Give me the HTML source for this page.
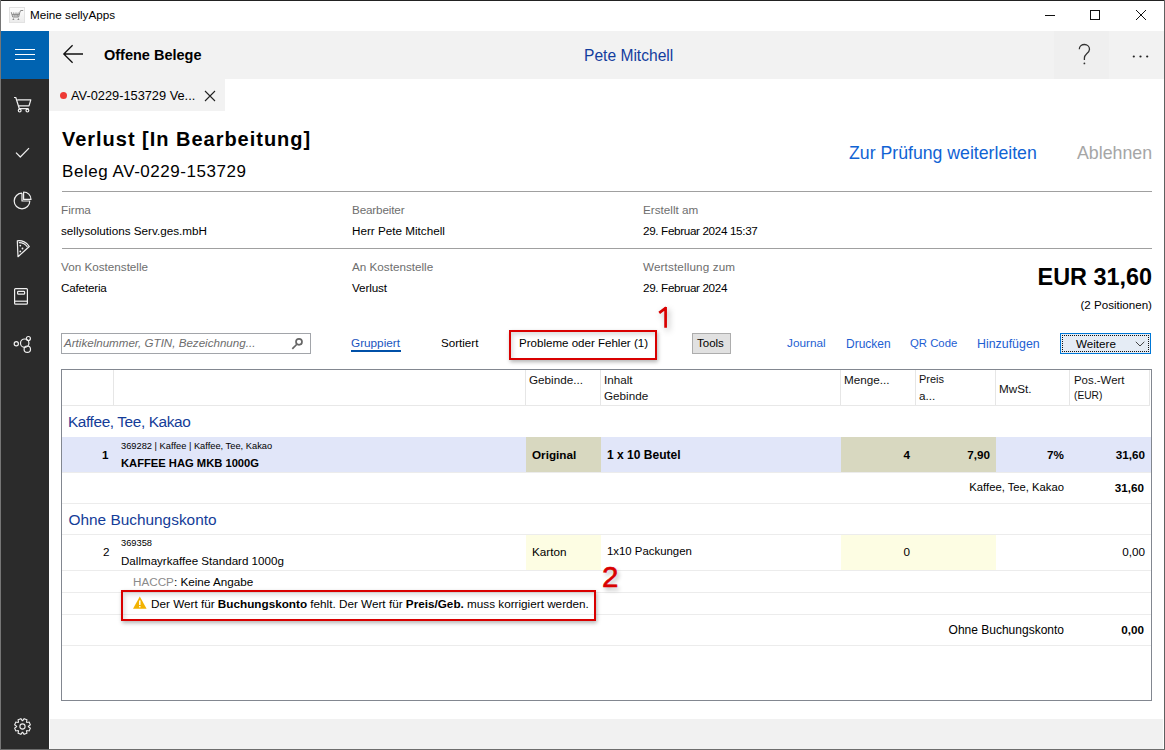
<!DOCTYPE html>
<html><head><meta charset="utf-8">
<style>
*{box-sizing:border-box}
html,body{margin:0;padding:0}
body{width:1165px;height:750px;position:relative;overflow:hidden;background:#fff;font-family:"Liberation Sans",sans-serif;color:#000}
.a{position:absolute;white-space:nowrap;line-height:1}
</style></head><body>
<div class="a" style="left:0px;top:0px;width:1165px;height:1px;background:#222"></div>
<div class="a" style="left:0px;top:0px;width:1px;height:750px;background:#767676"></div>
<div class="a" style="left:1164px;top:0px;width:1px;height:750px;background:#606060"></div>
<div class="a" style="left:0px;top:749px;width:1165px;height:1px;background:#6d6d6d"></div>
<div class="a" style="left:9px;top:7px;width:16px;height:16px;border:1px solid #e2e2e2;background:linear-gradient(#fdfdfd,#ececec)"></div>
<div class="a" id="t_title" style="left:30px;top:9px;font-size:11.7px;color:#000">Meine sellyApps</div>
<div class="a" style="left:1px;top:31px;width:48px;height:718px;background:#2b2b2b"></div>
<div class="a" style="left:1px;top:31px;width:48px;height:48px;background:#0063b1"></div>
<div class="a" style="left:15px;top:49px;width:20px;height:1.4px;background:#fff"></div>
<div class="a" style="left:15px;top:54px;width:20px;height:1.4px;background:#fff"></div>
<div class="a" style="left:15px;top:59px;width:20px;height:1.4px;background:#fff"></div>
<div class="a" style="left:49px;top:31px;width:1115px;height:48px;background:#f2f2f2"></div>
<div class="a" style="left:1054px;top:31px;width:55px;height:48px;background:#efefef"></div>
<div class="a" id="t_offene" style="left:104px;top:48px;font-size:14.5px;font-weight:bold">Offene Belege</div>
<div class="a" id="t_pete" style="left:584px;top:48px;font-size:15.6px;color:#123d9e">Pete Mitchell</div>
<div class="a" style="left:49px;top:79px;width:176px;height:32px;background:#f2f2f2"></div>
<div class="a" style="left:60px;top:92px;width:7px;height:7px;background:#ee3a35;border-radius:50%"></div>
<div class="a" id="t_tab" style="left:71px;top:90px;font-size:12.8px;color:#000">AV-0229-153729 Ve...</div>
<div class="a" id="t_verlust" style="left:62px;top:129px;font-size:20px;font-weight:bold;letter-spacing:0.98px">Verlust [In Bearbeitung]</div>
<div class="a" id="t_beleg" style="left:62px;top:162.5px;font-size:17px;letter-spacing:0.55px">Beleg AV-0229-153729</div>
<div class="a" id="t_zur" style="left:849px;top:145px;font-size:17.7px;color:#1063d4">Zur Prüfung weiterleiten</div>
<div class="a" id="t_abl" style="left:1077px;top:145px;font-size:17.8px;color:#a6a6a6">Ablehnen</div>
<div class="a" style="left:62px;top:191px;width:1090px;height:1px;background:#a0a0a0"></div>
<div class="a" style="left:61px;top:203.8px;font-size:11.7px;color:#6e6e6e">Firma</div>
<div class="a" style="left:61px;top:225.3px;font-size:11.7px">sellysolutions Serv.ges.mbH</div>
<div class="a" style="left:352px;top:203.8px;font-size:11.7px;color:#6e6e6e;letter-spacing:-0.15px">Bearbeiter</div>
<div class="a" style="left:352px;top:225.3px;font-size:11.7px">Herr Pete Mitchell</div>
<div class="a" style="left:643px;top:203.8px;font-size:11.7px;color:#6e6e6e">Erstellt am</div>
<div class="a" style="left:643px;top:225.3px;font-size:11.7px;letter-spacing:-0.35px">29. Februar 2024 15:37</div>
<div class="a" style="left:62px;top:248px;width:1090px;height:1px;background:#a0a0a0"></div>
<div class="a" style="left:61px;top:260.8px;font-size:11.7px;color:#6e6e6e">Von Kostenstelle</div>
<div class="a" style="left:61px;top:282.3px;font-size:11.7px;letter-spacing:-0.2px">Cafeteria</div>
<div class="a" style="left:352px;top:260.8px;font-size:11.7px;color:#6e6e6e">An Kostenstelle</div>
<div class="a" style="left:352px;top:282.3px;font-size:11.7px;letter-spacing:-0.12px">Verlust</div>
<div class="a" style="left:643px;top:260.8px;font-size:11.7px;color:#6e6e6e;letter-spacing:0.13px">Wertstellung zum</div>
<div class="a" style="left:643px;top:282.3px;font-size:11.7px;letter-spacing:-0.35px">29. Februar 2024</div>
<div class="a" id="t_eur" style="right:13px;top:266px;font-size:23.4px;font-weight:bold">EUR 31,60</div>
<div class="a" id="t_pos" style="right:13px;top:298.5px;font-size:11.6px">(2 Positionen)</div>
<div class="a" style="left:61px;top:333px;width:250px;height:21px;background:#fff;border:1px solid #a2a5aa"></div>
<div class="a" id="t_ph" style="left:64px;top:337px;font-size:11.6px;color:#6d6d6d;font-style:italic">Artikelnummer, GTIN, Bezeichnung...</div>
<div class="a" id="t_grp" style="left:351px;top:337px;font-size:11.75px;color:#1a55c0">Gruppiert</div>
<div class="a" style="left:351px;top:350px;width:50px;height:2px;background:#0050a8"></div>
<div class="a" id="t_sort" style="left:441px;top:337px;font-size:11.6px">Sortiert</div>
<div class="a" style="left:509px;top:330px;width:148px;height:30px;border:2px solid #d90000;box-shadow:1px 2px 4px rgba(0,0,0,.3),inset 2px 3px 4px rgba(0,0,0,.13)"></div>
<div class="a" id="t_prob" style="left:519px;top:338.4px;font-size:11.55px">Probleme oder Fehler (1)</div>
<svg class="a" style="left:650px;top:300px;filter:drop-shadow(2px 3px 3px rgba(0,0,0,.3))" width="30" height="34" viewBox="650 300 30 34"><path d="M665.6 307 V327.8 M666.2 307.6 L659.2 312.8" fill="none" stroke="#d90000" stroke-width="2.7" stroke-linecap="butt"/></svg>
<div class="a" style="left:692px;top:333px;width:39px;height:21px;background:#e1e1e1;border:1px solid #adadad"></div>
<div class="a" id="t_tools" style="left:697px;top:338.4px;font-size:11.5px">Tools</div>
<div class="a" id="t_jour" style="left:787px;top:338px;font-size:11.8px;color:#1d60d2">Journal</div>
<div class="a" id="t_druck" style="left:846px;top:338px;font-size:12px;color:#1d60d2">Drucken</div>
<div class="a" id="t_qr" style="left:910px;top:338px;font-size:11.35px;color:#1d60d2">QR Code</div>
<div class="a" id="t_hinz" style="left:977px;top:338px;font-size:12.4px;color:#1d60d2">Hinzufügen</div>
<div class="a" style="left:1060px;top:333px;width:91px;height:21px;background:#e5ecf5;border:1px solid #0078d7"></div>
<div class="a" style="left:1062px;top:335px;width:87px;height:17px;border:1px dotted #111"></div>
<div class="a" id="t_weit" style="left:1076px;top:338px;font-size:11.65px">Weitere</div>
<div class="a" style="left:61px;top:369px;width:1091px;height:332px;background:#fff;border:1px solid #828790"></div>
<div class="a" style="left:113px;top:370px;width:1px;height:35px;background:#e6e6e6"></div>
<div class="a" style="left:525px;top:370px;width:1px;height:35px;background:#e6e6e6"></div>
<div class="a" style="left:600px;top:370px;width:1px;height:35px;background:#e6e6e6"></div>
<div class="a" style="left:840px;top:370px;width:1px;height:35px;background:#e6e6e6"></div>
<div class="a" style="left:915px;top:370px;width:1px;height:35px;background:#e6e6e6"></div>
<div class="a" style="left:995px;top:370px;width:1px;height:35px;background:#e6e6e6"></div>
<div class="a" style="left:1069px;top:370px;width:1px;height:35px;background:#e6e6e6"></div>
<div class="a" style="left:1149px;top:370px;width:1px;height:35px;background:#e6e6e6"></div>
<div class="a" style="left:62px;top:405px;width:1088px;height:1px;background:#e8e8e8"></div>
<div class="a" style="left:529px;top:373.8px;font-size:11.7px;color:#111">Gebinde...</div>
<div class="a" style="left:604px;top:373.8px;font-size:11.7px;color:#111">Inhalt</div>
<div class="a" style="left:604px;top:389.8px;font-size:11.7px;color:#111">Gebinde</div>
<div class="a" style="left:844px;top:373.5px;font-size:11.7px;color:#111">Menge...</div>
<div class="a" style="left:919px;top:373.5px;font-size:11px;color:#111">Preis</div>
<div class="a" style="left:919px;top:389.5px;font-size:11.7px;color:#111">a...</div>
<div class="a" style="left:999px;top:382.5px;font-size:11.7px;color:#111">MwSt.</div>
<div class="a" style="left:1074px;top:374.5px;font-size:11.4px;color:#111">Pos.-Wert</div>
<div class="a" style="left:1074px;top:390.5px;font-size:10.2px;color:#111">(EUR)</div>
<div class="a" id="t_g1" style="left:68px;top:414px;font-size:15.4px;color:#143c98;letter-spacing:-0.4px">Kaffee, Tee, Kakao</div>
<div class="a" style="left:62px;top:437px;width:1089px;height:35px;background:#e1e6f9"></div>
<div class="a" style="left:526px;top:437px;width:75px;height:35px;background:#d8d8c0"></div>
<div class="a" style="left:841px;top:437px;width:155px;height:35px;background:#d8d8c0"></div>
<div class="a" style="left:102px;top:448.5px;font-size:11.7px;font-weight:bold">1</div>
<div class="a" id="t_art1" style="left:121px;top:442px;font-size:9.3px">369282 | Kaffee | Kaffee, Tee, Kakao</div>
<div class="a" id="t_kaf" style="left:121px;top:457.5px;font-size:11.2px;font-weight:bold">KAFFEE HAG MKB 1000G</div>
<div class="a" style="left:532px;top:448.5px;font-size:11.7px;font-weight:bold">Original</div>
<div class="a" style="left:607px;top:448.5px;font-size:12.05px;font-weight:bold">1 x 10 Beutel</div>
<div class="a" style="right:255px;top:448.8px;font-size:11.7px;font-weight:bold">4</div>
<div class="a" style="right:175px;top:448.8px;font-size:11.7px;font-weight:bold">7,90</div>
<div class="a" style="right:101px;top:448.8px;font-size:11.7px;font-weight:bold">7%</div>
<div class="a" style="right:20px;top:448.8px;font-size:11.7px;font-weight:bold">31,60</div>
<div class="a" style="left:62px;top:472px;width:1089px;height:1px;background:#ececec"></div>
<div class="a" style="right:101px;top:481.5px;font-size:11.25px">Kaffee, Tee, Kakao</div>
<div class="a" style="right:21px;top:481.5px;font-size:11.7px;font-weight:bold">31,60</div>
<div class="a" style="left:62px;top:503px;width:1089px;height:1px;background:#ececec"></div>
<div class="a" id="t_g2" style="left:68.5px;top:512px;font-size:15.4px;color:#143c98">Ohne Buchungskonto</div>
<div class="a" style="left:62px;top:534px;width:1089px;height:1px;background:#ececec"></div>
<div class="a" style="left:526px;top:535px;width:75px;height:35px;background:#fdfde3"></div>
<div class="a" style="left:841px;top:535px;width:155px;height:35px;background:#fdfde3"></div>
<div class="a" style="left:103px;top:546.3px;font-size:11.7px">2</div>
<div class="a" id="t_art2" style="left:121px;top:539.3px;font-size:9.3px">369358</div>
<div class="a" id="t_dall" style="left:121px;top:554.5px;font-size:11.6px">Dallmayrkaffee Standard 1000g</div>
<div class="a" style="left:532px;top:546px;font-size:11.7px">Karton</div>
<div class="a" style="left:607px;top:546px;font-size:11.4px">1x10 Packungen</div>
<div class="a" style="right:255px;top:546.3px;font-size:11.7px">0</div>
<div class="a" style="right:20px;top:546.3px;font-size:11.7px">0,00</div>
<div class="a" style="left:62px;top:570px;width:1089px;height:1px;background:#ececec"></div>
<div class="a" id="t_haccp" style="left:133px;top:575.5px;font-size:11.7px"><span style="color:#8a8a8a">HACCP</span>: Keine Angabe</div>
<div class="a" style="left:62px;top:592px;width:1089px;height:1px;background:#ececec"></div>
<div class="a" style="left:62px;top:614px;width:1089px;height:1px;background:#ececec"></div>
<div class="a" style="left:121px;top:590px;width:475px;height:31px;border:2px solid #d90000;box-shadow:1px 2px 4px rgba(0,0,0,.3),inset 2px 3px 4px rgba(0,0,0,.13)"></div>
<div class="a" id="t_warn" style="left:151px;top:597.8px;font-size:11.73px">Der Wert für <b>Buchungskonto</b> fehlt. Der Wert für <b>Preis/Geb.</b> muss korrigiert werden.</div>
<div class="a" id="t_two" style="left:602px;top:562px;font-size:29.5px;color:#d90000;-webkit-text-stroke:0.6px #d90000;text-shadow:2px 3px 4px rgba(0,0,0,.3)">2</div>
<div class="a" style="right:101px;top:624.2px;font-size:12px">Ohne Buchungskonto</div>
<div class="a" style="right:21px;top:624.2px;font-size:11.7px;font-weight:bold">0,00</div>
<div class="a" style="left:62px;top:645px;width:1089px;height:1px;background:#ececec"></div>
<div class="a" style="left:50px;top:719px;width:1113px;height:30px;background:#f1f1f1"></div>
<svg class="a" style="left:0;top:0" width="1165" height="750" viewBox="0 0 1165 750">
<g fill="none" stroke="#8a8a8a" stroke-width="1">
<path d="M11.3 12.2 L12.7 17 H18.6 L19.9 12.2 L20.6 10.5 H23.2 M13.7 12.5 L14.3 16.5 M16 12.5 V16.5 M18.2 12.5 L17.6 16.5 M12 14.6 H19.3"/>
</g>
<g fill="#8a8a8a"><path d="M12.3 20 L13.4 18 L14.5 20 Z M17.3 20 L18.4 18 L19.5 20 Z"/></g>
<g stroke="#111" stroke-width="1" fill="none">
<path d="M1045 15.5 H1055"/>
<rect x="1090.5" y="10.5" width="9" height="9"/>
<path d="M1136 10 L1146 20 M1146 10 L1136 20"/>
</g>
<path d="M72.6 45.3 L63.8 54 L72.6 62.7 M64 54 H83" fill="none" stroke="#111" stroke-width="1.3"/>
<g fill="none" stroke="#333" stroke-width="1.3">
<path d="M1079.3 49.3 C1079.3 46.3 1081.8 44.5 1084.5 44.5 C1087.3 44.5 1089.5 46.5 1089.5 49.3 C1089.5 51.5 1088 52.7 1086.5 54 C1085 55.3 1084.4 56.5 1084.4 58 V60"/>
</g>
<circle cx="1084.4" cy="63.4" r="0.9" fill="#333"/>
<g fill="#222"><circle cx="1133.8" cy="56.5" r="1.1"/><circle cx="1140.5" cy="56.5" r="1.1"/><circle cx="1147.2" cy="56.5" r="1.1"/></g>
<path d="M205 91 L215 101 M215 91 L205 101" stroke="#222" stroke-width="1.1" fill="none"/>
<g fill="none" stroke="#f0f0f0" stroke-width="1.2" stroke-linejoin="round">
<path d="M14 97.5 H15.8 L19.3 108.7 H28.6 M17.3 99.8 H30.8 L29 105.8 H18.8"/>
<circle cx="19.7" cy="110.6" r="1.4"/><circle cx="27.4" cy="110.6" r="1.4"/>
<path d="M16 152.7 L20.3 157 L29 148.2"/>
<path d="M22 193.2 V201 H29.8 A7.8 7.8 0 1 1 22 193.2"/>
<path d="M23.6 199.4 V192 A7.4 7.4 0 0 1 31 199.4 Z"/>
<path d="M17.3 240.8 C22 240 27 242.5 29.3 246.5 L18 256.7 Z M18.8 242.6 C22.5 242.5 25.8 244.5 27.4 247"/>
<rect x="14.6" y="288.6" width="12.8" height="15.6" rx="1"/>
<path d="M14.6 301.2 H27.4"/>
<rect x="17.6" y="291.4" width="7" height="2.8" rx="0.8"/>
<circle cx="16.3" cy="343.7" r="2.1"/>
<circle cx="24.7" cy="343.2" r="4.2"/>
<circle cx="28.4" cy="338.5" r="2"/>
<circle cx="27.3" cy="349.2" r="3.2"/>
</g>
<g fill="#f0f0f0"><circle cx="20.3" cy="245.6" r="0.9"/><circle cx="22.5" cy="248.5" r="0.9"/><circle cx="20.3" cy="251.4" r="0.9"/></g>
<g fill="none" stroke="#f0f0f0" stroke-width="1.1">
<path d="M28.39 726.76 L30.34 728.09 L29.17 730.92 L26.85 730.49 L26.49 730.85 L26.92 733.17 L24.09 734.34 L22.76 732.39 L22.24 732.39 L20.91 734.34 L18.08 733.17 L18.51 730.85 L18.15 730.49 L15.83 730.92 L14.66 728.09 L16.61 726.76 L16.61 726.24 L14.66 724.91 L15.83 722.08 L18.15 722.51 L18.51 722.15 L18.08 719.83 L20.91 718.66 L22.24 720.61 L22.76 720.61 L24.09 718.66 L26.92 719.83 L26.49 722.15 L26.85 722.51 L29.17 722.08 L30.34 724.91 L28.39 726.24 Z"/>
<circle cx="22.5" cy="726.5" r="2.6"/>
</g>
<path d="M133 608.8 L139.8 596.5 L146.6 608.8 Z" fill="#f2b200"/>
<path d="M139.8 600.5 V605" stroke="#fff" stroke-width="1.4"/>
<rect x="139.1" y="606" width="1.4" height="1.4" fill="#fff"/>
<path d="M292.3 348.8 L296.6 344.5" stroke="#666" stroke-width="1.7"/>
<circle cx="299" cy="341.8" r="3" fill="none" stroke="#666" stroke-width="1.7"/>
<path d="M1135.8 341.8 L1140 346 L1144.3 341.8" fill="none" stroke="#444" stroke-width="1"/>
</svg>
</body></html>
